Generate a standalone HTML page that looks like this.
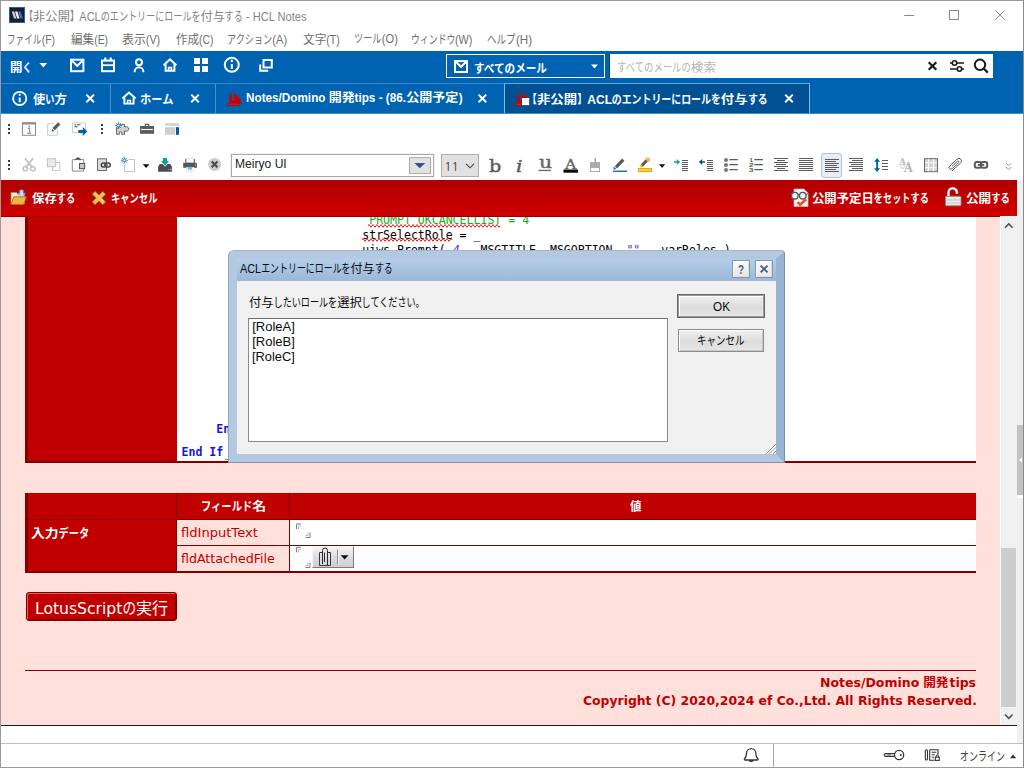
<!DOCTYPE html>
<html lang="ja"><head><meta charset="utf-8"><title>HCL Notes</title>
<style>
html,body{margin:0;padding:0}
body{width:1024px;height:768px;position:relative;overflow:hidden;background:#fff;font-family:"Liberation Sans","Noto Sans CJK JP",sans-serif}
.a{position:absolute}
.t{position:absolute;white-space:pre;line-height:1;transform-origin:0 0}
.r{display:inline-block;white-space:pre;vertical-align:baseline}
.s{display:inline-block;transform-origin:0 0;white-space:pre}
svg{position:absolute;overflow:visible}
</style></head><body>
<!-- ===== window chrome ===== -->
<div class="a" style="left:0;top:0;width:1024px;height:768px;box-sizing:border-box;border:1px solid #9b9b9b;border-right-color:#8a8a8a"></div>
<!-- blue nav bar -->
<div class="a" id="nav" style="left:1px;top:51px;width:1022px;height:32px;background:#0063b1"></div>
<!-- tab bar -->
<div class="a" id="tabs" style="left:1px;top:83px;width:1022px;height:31px;background:#0063b1"></div>
<!-- title icon + window controls -->
<svg style="left:0;top:0" width="1024" height="32" viewBox="0 0 1024 32" fill="none">
 <rect x="9.500" y="7.500" width="15" height="15" fill="#1a1e28" stroke="#2a5db8" stroke-width="1"/>
 <path d="M11.800 11.500l2.400 0 2.200 7-2.400 0z" fill="#c8ccd4"/><path d="M15 11.500l2.400 0 2.200 7-2.400 0z" fill="#f2f2f2"/><path d="M18.200 11.500l2.400 0 2.200 7-2.400 0z" fill="#3b78d8"/>
 <path d="M904.200 15.500h10" stroke="#8a8a8a" stroke-width="1"/>
 <rect x="949.500" y="10.500" width="9" height="9" stroke="#8a8a8a" stroke-width="1"/>
 <path d="M995.300 10.300l9.400 9.400M1004.700 10.300l-9.400 9.400" stroke="#8a8a8a" stroke-width="1"/>
</svg>
<!-- tab separators / active tab -->
<div class="a" style="left:1px;top:83px;width:809px;height:1px;background:#3d87c8"></div>
<div class="a" style="left:110px;top:84px;width:1px;height:29px;background:#4a90cf"></div>
<div class="a" style="left:215px;top:84px;width:1px;height:29px;background:#4a90cf"></div>
<div class="a" style="left:504px;top:83px;width:306px;height:30px;box-sizing:border-box;background:#005193;border:1px solid #8ab8e4;border-top-color:#6aa5da;border-bottom:none"></div>
<div class="a" style="left:1px;top:113px;width:1022px;height:1px;background:#3f8fd0"></div>
<!-- view dropdown + search -->
<div class="a" style="left:446px;top:54px;width:159px;height:24px;box-sizing:border-box;border:1px solid #fff"></div>
<div class="a" style="left:609px;top:54px;width:384px;height:24px;background:#fff;box-sizing:border-box;border-left:1px solid #1c3f66"></div>
<svg style="left:0;top:0" width="1024" height="120" viewBox="0 0 1024 120" fill="none" stroke="#fff" stroke-width="2">
 <!-- open caret -->
 <path d="M39.4 63h7.8l-3.9 4.4z" fill="#fff" stroke="none"/>
 <!-- mail -->
 <rect x="71" y="59.7" width="12.4" height="11.5"/><path d="M72 60.7l5.2 5.2 5.2-5.2"/>
 <!-- calendar -->
 <rect x="102" y="60.600" width="12" height="10.600"/><path d="M102 65.200h12" stroke-width="1.800"/><path d="M105.300 57.600v3M110.700 57.600v3" stroke-width="2.200"/>
 <!-- person -->
 <circle cx="139" cy="62.300" r="3"/><path d="M134.600 72.300v-.600a4.400 4.400 0 0 1 8.800 0v.600"/>
 <!-- home -->
 <path d="M163.6 65.3l6.4-6 6.4 6M165.6 64v6.8h8.8V64" stroke-linejoin="miter"/><path d="M168.6 70.6v-3h2.8v3" stroke-width="1.6"/>
 <!-- grid -->
 <g fill="#fff" stroke="none"><rect x="194" y="58" width="6" height="6"/><rect x="202" y="58" width="6" height="6"/><rect x="194" y="66" width="6" height="6"/><rect x="202" y="66" width="6" height="6"/></g>
 <!-- info -->
 <circle cx="231.8" cy="64.8" r="7"/><path d="M231.8 64v5" /><circle cx="231.8" cy="61" r="1.2" fill="#fff" stroke="none"/>
 <!-- windows -->
 <rect x="263.5" y="60" width="8.3" height="7.5"/><path d="M260.2 64.5v6.2h8"/>
 <!-- dropdown mail icon -->
 <rect x="455" y="61.100" width="12" height="10.900"/><path d="M456 62.100l5 4.700 5-4.700"/>
 <path d="M591 64.500h7l-3.500 4z" fill="#fff" stroke="none"/>
 <!-- search icons -->
 <g stroke="#1a1a1a">
  <path d="M928.700 62.200l7.600 7.600M936.300 62.200l-7.600 7.600" stroke-width="2.200"/>
  <path d="M950 63h14M950 69h14" stroke-width="1.600"/><circle cx="954.500" cy="63" r="2.200" fill="#fff" stroke-width="1.600"/><circle cx="959.500" cy="69" r="2.200" fill="#fff" stroke-width="1.600"/>
  <circle cx="980" cy="64.800" r="5.200" stroke-width="2"/><path d="M984 68.800l3.800 3.800" stroke-width="2.200"/>
 </g>
 <!-- tab icons -->
 <circle cx="19.700" cy="98.400" r="6.600" stroke-width="1.800"/><path d="M19.700 97.600v4.600"/><circle cx="19.700" cy="94.800" r="1.100" fill="#fff" stroke="none"/>
 <path d="M122.400 98.500l6.600-6 6.600 6M124.400 97.200v6.400h9.200v-6.400" stroke-width="1.900"/><path d="M127.600 103.400v-3h2.800v3" stroke-width="1.500"/>
 <!-- tab close X -->
 <g stroke-width="2"><path d="M86.400 94.600l7.600 7.600M94 94.600l-7.600 7.600"/><path d="M191.200 94.600l7.600 7.600M198.800 94.600l-7.600 7.600"/><path d="M478.600 94.600l7.600 7.600M486.200 94.600l-7.600 7.600"/><path d="M785.200 94.600l7.600 7.600M792.800 94.600l-7.600 7.600"/></g>
 <!-- flask icons -->
 <g transform="translate(0 0)" stroke="none" fill="#cc0000">
  <path d="M232.200 90.200h1.200l.600.800v1.600h-.600v-1.400z"/>
  <path d="M231 93.200h1v6l-.800 1.400-.900-1zM234 93.200h1v6.800l-1-1.200z"/>
  <path d="M229.300 95h2v4.800l-1 .9-1.300-1.800.500-1.500-.300-1.200z"/>
  <path d="M234.300 95h3l1.200 1.500.600 1.900 1.800.900v4.600h-1.600l-4.400-5z"/>
  <path d="M227.300 103.700l5.400-5.700 1 0 5.500 5.700.300 1.800-.600.600h-11.300l-.600-.600z"/>
  <path d="M231.500 100.300l1.700-1.900 1.700 1.900z" fill="#1a6ab8"/>
  <path d="M228.600 104.200h9.600" stroke="#3a76c0" stroke-width=".6"/>
 </g>
 <g transform="translate(288 0)" stroke="none" fill="#cc0000">
  <path d="M232.200 90.200h1.200l.600.800v1.600h-.600v-1.400z"/>
  <path d="M231 93.200h1v6l-.800 1.400-.900-1zM234 93.200h1v6.800l-1-1.200z"/>
  <path d="M229.300 95h2v4.800l-1 .9-1.300-1.800.500-1.500-.300-1.200z"/>
  <path d="M234.300 95h3l1.200 1.500.600 1.900 1.800.900v4.600h-1.600l-4.400-5z"/>
  <path d="M227.300 103.700l5.400-5.700 1 0 5.500 5.700.300 1.800-.600.600h-11.300l-.600-.600z"/>
  <path d="M231.500 100.300l1.700-1.900 1.700 1.900z" fill="#1a6ab8"/>
  <path d="M228.600 104.200h9.600" stroke="#3a76c0" stroke-width=".6"/>
 </g>
 <rect x="522" y="98" width="8" height="8" fill="#5a5a5a" stroke="none"/><rect x="522" y="98" width="7" height="7" fill="#fff" stroke="none"/>
</svg>

<!-- toolbars -->
<!-- font + size combos, selected align button -->
<div class="a" style="left:231px;top:154px;width:203px;height:23px;box-sizing:border-box;border:1px solid #a9a9a9;background:#fff;box-shadow:0 0 0 1px #f2f2f2"></div>
<div class="a" style="left:409px;top:157px;width:22px;height:17px;box-sizing:border-box;border:1px solid #adadad;background:#e1e1e1"></div>
<div class="a" style="left:441px;top:154px;width:38px;height:23px;box-sizing:border-box;border:1px solid #adadad;background:#e1e1e1"></div>
<div class="a" style="left:821px;top:153px;width:21px;height:25px;box-sizing:border-box;border:1px solid #a9c3ea;border-radius:3px;background:#e8ecf4"></div>
<svg style="left:0;top:110px" width="1024" height="72" viewBox="0 110 1024 72" fill="none">
 <!-- grips -->
 <g fill="#3c3c3c"><rect x="8" y="124" width="2" height="2"/><rect x="8" y="128" width="2" height="2"/><rect x="8" y="132" width="2" height="2"/>
 <rect x="101" y="124" width="2" height="2"/><rect x="101" y="128" width="2" height="2"/><rect x="101" y="132" width="2" height="2"/>
 <rect x="8" y="160" width="2" height="2"/><rect x="8" y="164" width="2" height="2"/><rect x="8" y="168" width="2" height="2"/></g>
 <!-- info box -->
 <rect x="22.500" y="123" width="13" height="12.300" stroke="#8c8c8c"/><rect x="22" y="122.300" width="14" height="2.200" fill="#8c8c8c"/>
 <path d="M27.700 128.400h1.900v4.600M27.300 133.300h4" stroke="#9a9a9a" stroke-width="1.300"/><rect x="28.400" y="125.800" width="1.600" height="1.500" fill="#9a9a9a"/>
 <!-- edit -->
 <path d="M54 123.800h-6.300v11.400h9.600v-6" stroke="#c9c9c9"/><path d="M59.300 123.300l-5.600 5.900" stroke="#5a5a5a" stroke-width="3.200"/><path d="M52 128.800l-.3 2.600 2.700-.4z" fill="#0f62a8"/>
 <!-- forward -->
 <rect x="72.500" y="122.800" width="13" height="9.700" stroke="#cfcfcf"/><path d="M74.500 124.800h1.600M77 124.800h3.500M74.500 126.800h3.200" stroke="#4a4a4a" stroke-width="1.100"/>
 <path d="M78.300 130h4.500v-2.900l4.500 4.400-4.500 4.400v-2.900h-4.500z" fill="#0060a8"/>
 <!-- puzzle -->
 <path d="M116.500 134.300v-6.300h2.500c-.8-2.200.3-3.700 2.400-3.700h3.100v2.700c2.200-.9 4.300.1 4.300 1.900 0 1.900-2.100 2.900-4.300 2v3.400h-2.800v-2.500h-2.400v2.500z" fill="#d2d2d2" stroke="#6a6a6a" stroke-width="1"/>
 <g stroke="#1f78c8" stroke-width="0.900"><path d="M118.400 122v7M114.900 125.500h7M116 123.100l4.800 4.800M120.800 123.100l-4.800 4.800"/></g><circle cx="118.400" cy="125.500" r="1.300" fill="#fff" stroke="#1f78c8" stroke-width=".8"/>
 <!-- toolbox -->
 <path d="M140 126h14v7.800h-14z" fill="#5a5a5a"/><path d="M145.300 126v-1.700h3.400v1.700" stroke="#5a5a5a" stroke-width="1.200"/><path d="M141.500 129.500h11" stroke="#fff" stroke-width="1"/><path d="M142 128.500v2M152 128.500v2" stroke="#fff" stroke-width="0.800"/>
 <!-- layout -->
 <rect x="165" y="123" width="14" height="3" fill="#d6d6d6"/><rect x="165" y="127.200" width="10.300" height="7.600" fill="#cfcfcf"/><rect x="176" y="127.200" width="3" height="7.600" fill="#005a9e"/>
 <!-- scissors -->
 <g stroke="#c2c2c2" stroke-width="1.500"><path d="M24.800 158.300l7.400 9.200M33.200 158.300l-7.400 9.200" stroke-width="1.800"/><ellipse cx="25.300" cy="168.700" rx="2.300" ry="2.100" transform="rotate(-35 25.300 168.700)"/><ellipse cx="32.700" cy="168.700" rx="2.300" ry="2.100" transform="rotate(35 32.700 168.700)"/></g>
 <!-- copy -->
 <rect x="52.500" y="162.500" width="7.300" height="7.800" stroke="#c6c6c6" fill="#fff"/><rect x="47.500" y="158.700" width="8.200" height="8" stroke="#c2c2c2" fill="#e9e9e9"/>
 <!-- paste -->
 <path d="M72.300 159.600h11.400v11.500h-11.400z" stroke="#8a8a8a" fill="#fff"/><path d="M75 159.800h6l-1.200-1.600-1.800-1.200-1.800 1.200z" fill="#555"/><rect x="79.500" y="163.500" width="5.200" height="5.200" fill="#c6c6c6" stroke="#555"/>
 <!-- link box -->
 <rect x="97.500" y="158.800" width="9" height="11.700" fill="#dedede" stroke="#6a6a6a"/><rect x="101.300" y="163" width="5" height="4" rx="2" stroke="#444" stroke-width="1.500" fill="#dedede"/><rect x="105.300" y="163" width="5" height="4" rx="2" stroke="#444" stroke-width="1.500" fill="#fff"/><path d="M104 165h4" stroke="#444" stroke-width="1.400"/>
 <!-- new doc -->
 <path d="M124.500 159.500h10v12h-10z" fill="#fff" stroke="#c4c4c4"/><rect x="120" y="156" width="8.600" height="8.600" fill="#fff"/>
 <g stroke="#1f78c8" stroke-width="0.900"><path d="M124.300 156.800v7M120.800 160.300h7M121.900 157.900l4.800 4.800M126.700 157.900l-4.800 4.800"/></g><circle cx="124.300" cy="160.300" r="1.300" fill="#fff" stroke="#1f78c8" stroke-width=".8"/>
 <path d="M142.800 164.200h6.600l-3.300 3.900z" fill="#111"/>
 <!-- download tray -->
 <path d="M158.100 171.800v-5.300l1.800-2.400h2.600l2.500 2.300 2.500-2.300h2.700l1.700 2.400v5.300z" fill="#4d4d4d"/><path d="M162.900 158.100h4.100v2.900h2l-4 4.700-4-4.700h1.900z" fill="#07a39c"/><rect x="167.900" y="168.800" width="1.300" height="1.300" fill="#10b0aa"/><rect x="169.900" y="168.800" width="1.300" height="1.300" fill="#5cc8f2"/>
 <!-- printer -->
 <rect x="185.300" y="159" width="9.600" height="4" fill="#555"/><rect x="186.500" y="158.400" width="7.200" height="4.400" fill="#fff" stroke="#d4d4d4" stroke-width=".6"/><path d="M183.200 162.800h13.700v5h-13.700z" fill="#555"/><rect x="186.300" y="167.300" width="7.600" height="4.300" fill="#fff" stroke="#d4d4d4" stroke-width=".6"/><rect x="187.800" y="166.900" width="4.300" height="2.800" fill="#68bdf0"/><rect x="194.900" y="164.200" width="1" height="1.600" fill="#8fd14f"/>
 <!-- circle x -->
 <circle cx="214.600" cy="164.400" r="6.500" fill="#cdcdcd"/><path d="M211.700 161.500l5.800 5.800M217.500 161.500l-5.800 5.800" stroke="#4a4a4a" stroke-width="2.200"/>
 <!-- combo arrows -->
 <path d="M414.300 163h11l-5.500 5.300z" fill="#2f5597"/><path d="M466 163.800l4 4 4-4" stroke="#444" stroke-width="1.100"/>
 <!-- A underline bar, u underline -->
 <rect x="563.500" y="169.500" width="14.500" height="3.200" fill="#0a0a0a"/>
 <rect x="538.500" y="169.800" width="12.500" height="1.300" fill="#6a6a6a"/>
 <!-- gray brush -->
 <rect x="594.500" y="158" width="1.500" height="4.500" fill="#aaa"/><rect x="590.500" y="162.500" width="9" height="9" fill="#fff" stroke="#aaa"/><rect x="590.500" y="162.500" width="9" height="5.500" fill="#aaa"/>
 <!-- pencil line -->
 <path d="M623.300 159.600l-7.400 7.700" stroke="#5a5a5a" stroke-width="3.200"/><path d="M613.700 166.600l-.2 2.900 2.900-.4z" fill="#0f62a8"/><rect x="613" y="170.600" width="14" height="1.300" fill="#0060a8"/>
 <!-- highlighter -->
 <rect x="638.500" y="168.600" width="13" height="3" fill="#ffd83a" stroke="#f59a00"/><path d="M646.800 160.400l-5 5.300" stroke="#5a5a5a" stroke-width="3"/><circle cx="648" cy="159.600" r="1.700" fill="#ffc83a" stroke="#f08a00" stroke-width=".7"/><path d="M639.500 167.800l1.300-3.200 2.400 2.200z" fill="#ffb400"/>
 <path d="M659 164.200h6.200l-3.100 3.800z" fill="#111"/>
 <!-- indent -->
 <path d="M674 161.200h2.800v-2.100l3.300 2.900-3.300 2.900v-2.100h-2.800z" fill="#12a5a5"/>
 <g stroke="#5a5a5a" stroke-width="1"><path d="M682 160.5h6M682 162.5h6M682 164.5h6M682 166.5h6M682 168.5h6M682 170.5h6"/><path d="M707 160.5h6M707 162.5h6M707 164.5h6M707 166.5h6M707 168.5h6M707 170.5h6"/></g>
 <path d="M705 161.200h-2.800v-2.100l-3.400 2.900 3.400 2.900v-2.100h2.800z" fill="#0a5c5c"/>
 <!-- bullets -->
 <g fill="#777"><circle cx="726" cy="159.900" r="2"/><circle cx="726" cy="165" r="2"/><circle cx="726" cy="170.100" r="2"/></g>
 <g stroke="#5a5a5a" stroke-width="1.300"><path d="M729.300 159.600h8.500M729.300 164.700h8.500M729.300 169.700h8.500M754.300 159.600h8.600M754.300 164.700h8.600M754.300 169.700h8.600"/></g>
 <!-- center / justify / left / right -->
 <g stroke="#5a5a5a" stroke-width="1"><path d="M774 158.5h14M777 160.5h8M774 162.5h14M776 164.5h10M774 166.5h14M777 168.5h8M774 170.5h14"/><path d="M799 158.5h14M799 160.5h14M799 162.5h14M799 164.5h14M799 166.5h14M799 168.5h14M799 170.5h14"/><path d="M825 159.5h14M825 161.5h11M825 163.5h14M825 165.5h12M825 167.5h14M825 169.5h11M825 171.5h14"/><path d="M849 158.5h14M852 160.5h11M849 162.5h14M851 164.5h12M849 166.5h14M852 168.5h11M849 170.5h14"/>
 <path d="M882 160.500h6M882 163.500h6M882 166.500h6M882 169.500h6"/></g>
 <path d="M877.100 158l3 3.700h-2.100v6.600h2.100l-3 3.700-3-3.700h2.100v-6.600h-2.100z" fill="#0060a0"/>
 <!-- table -->
 <rect x="924.500" y="158.700" width="13" height="13" fill="#d4d4d4" stroke="#686868"/><path d="M928.500 159.200v12M933.500 159.200v12M925 162.700h12M925 167.700h12" stroke="#fbfbfb" stroke-width="1"/>
 <!-- paperclip -->
 <g transform="rotate(-43 955.500 165)" stroke="#555" stroke-width=".9"><path d="M948.500 167h12.200a2.600 2.600 0 0 0 0-5.200h-10.200a1.800 1.800 0 0 0 0 3.600h9a.900.900 0 0 0 0-1.800h-7.500"/></g>
 <!-- link -->
 <rect x="974.800" y="162" width="6.400" height="5.700" rx="2" stroke="#5a5a5a" stroke-width="2"/><rect x="980.800" y="162" width="6.400" height="5.700" rx="2" stroke="#5a5a5a" stroke-width="2"/><path d="M977.800 164.850h6.400" stroke="#5a5a5a" stroke-width="1.900"/>
 <!-- AA diamond -->
 <path d="M900.500 166.500l2.200-2.600 2.200 2.600-2.200 2.600z" stroke="#c4c4c4" stroke-width=".9"/>
 <!-- chevrons -->
 <path d="M1006 163.200l2.700 2.400 2.700-2.400M1006 167l2.700 2.400 2.700-2.400" stroke="#8a8a8a" stroke-width=".9"/>
</svg>

<!-- red action bar -->
<div class="a" id="actbar" style="left:1px;top:180px;width:1016px;height:36px;background:linear-gradient(#b00000 0,#b80000 30%,#cf0000 100%)"></div>
<div class="a" style="left:1px;top:216px;width:1016px;height:1px;background:#980000"></div>
<div class="a" style="left:1017px;top:180px;width:6px;height:563px;background:#f0f0f0"></div>
<svg style="left:0;top:180px" width="1024" height="36" viewBox="0 180 1024 36" fill="none">
 <!-- save folder -->
 <path d="M11 192.500h5.500l1.500 1.800h6.500v9.500h-13.500z" fill="#f6efd6" stroke="#b98a2e" stroke-width=".8"/>
 <path d="M13.800 196.800h12.600l-2.800 7.600h-12.600z" fill="#f0b441" stroke="#a8741a" stroke-width=".9"/>
 <path d="M19.800 190h3.400v3.200h2.200l-3.900 3.900-3.900-3.900h2.200z" fill="#cfe2f7" stroke="#5b8fd0" stroke-width=".8"/>
 <!-- cancel X -->
 <g transform="rotate(45 98.900 198.100)"><path d="M91.400 196h5.400v-5.400h4.200v5.400h5.400v4.200h-5.400v5.400h-4.200v-5.400h-5.400z" fill="#efc050" stroke="#8f6218" stroke-width=".9" stroke-linejoin="round"/><path d="M92.400 197h13" stroke="#f8dc8a" stroke-width=".9"/></g>
 <!-- glasses doc -->
 <path d="M794 189h10l4 4v13.500h-14z" fill="#f4f4f4" stroke="#b9b9b9" stroke-width=".8"/>
 <circle cx="794.800" cy="195.700" r="3.300" fill="#e8f0f8" stroke="#555" stroke-width="1.300"/><circle cx="802.800" cy="195.700" r="3.300" fill="#e8f0f8" stroke="#555" stroke-width="1.300"/><path d="M798 195h1.600M791 194.500l-1-1M806.200 194.500l1.600-1" stroke="#555" stroke-width="1"/>
 <path d="M797.500 202.200l2.600 2.600 6-5.600" stroke="#e8541c" stroke-width="2.600"/>
 <!-- lock -->
 <rect x="945.500" y="196.300" width="15.500" height="9.500" rx="1" fill="#e9e9e9" stroke="#8a8a8a" stroke-width=".9"/><path d="M946.500 200h13.500M946.500 203h13.500" stroke="#c4c4c4" stroke-width="1"/>
 <path d="M948.500 196v-3.500a4.200 4.200 0 0 1 8.400 0v1.200" stroke="#d0d0d0" stroke-width="2.600"/><path d="M948.500 196v-3.500a4.200 4.200 0 0 1 8.400 0v1.200" stroke="#f4f4f4" stroke-width="1.200"/>
</svg>

<!-- ===== document area ===== -->
<div class="a" id="doc" style="left:1px;top:217px;width:999px;height:508px;background:#ffe0db"></div>
<!-- table 1 (code) -->
<div class="a" style="left:25px;top:217px;width:152px;height:246px;background:#c00000;box-sizing:border-box;border-left:3px solid #800000;border-bottom:2px solid #800000"></div>
<div class="a" style="left:177px;top:217px;width:799px;height:246px;background:#fff;box-sizing:border-box;border-bottom:2px solid #800000"></div>
<div class="a" id="code" style="left:181.500px;top:217px;width:790px;height:244px;overflow:hidden;font-family:'DejaVu Sans Mono','Liberation Mono',monospace;font-size:11.550px;line-height:15px;white-space:pre;color:#000">
<div class="a" style="left:0;top:-4.300px;color:#18ae18">                           PROMPT_OKCANCELLIST = 4</div>
<div class="a" style="left:0;top:10.700px">                          strSelectRole = _</div>
<div class="a" style="left:0;top:25.700px">                          uiws.Prompt( <i style="color:#5a2ad2">4</i>,  MSGTITLE, MSGOPTION, <i style="color:#5a2ad2">""</i>,  varRoles )</div>
<div class="a" style="left:0;top:204.700px;color:#1414e6;font-weight:bold">     End If</div>
<div class="a" style="left:0;top:227.600px;color:#1414e6;font-weight:bold">End If</div>
</div>
<svg style="left:177px;top:217px" width="400" height="30" viewBox="177 217 400 30" fill="none" stroke="#e41a1a" stroke-width="1"><path d="M368 225.9q1 -2.800 2 0t2 0t2 0t2 0t2 0t2 0t2 0t2 0t2 0t2 0t2 0t2 0t2 0t2 0t2 0t2 0t2 0t2 0t2 0t2 0t2 0t2 0t2 0t2 0t2 0t2 0t2 0t2 0t2 0t2 0t2 0t2 0t2 0t2 0t2 0t2 0t2 0t2 0t2 0t2 0t2 0t2 0t2 0t2 0t2 0t2 0t2 0t2 0t2 0t2 0t2 0t2 0t2 0t2 0t2 0t2 0t2 0t2 0t2 0t2 0t2 0t2 0t2 0t2 0t2 0t2 0"/><path d="M362 239.9q1 -2.800 2 0t2 0t2 0t2 0t2 0t2 0t2 0t2 0t2 0t2 0t2 0t2 0t2 0t2 0t2 0t2 0t2 0t2 0t2 0t2 0t2 0t2 0t2 0t2 0t2 0t2 0t2 0t2 0t2 0t2 0t2 0t2 0t2 0t2 0t2 0t2 0t2 0t2 0t2 0t2 0t2 0t2 0t2 0t2 0t2 0"/></svg>
<div class="a" style="left:225px;top:457px;width:3px;height:2px;border-right:1px solid #8a8a8a;border-bottom:1px solid #8a8a8a"></div>
<!-- table 2 (input data) -->
<div class="a" style="left:25px;top:493px;width:951px;height:80px;background:#c00000;box-sizing:border-box;border-left:3px solid #800000;border-bottom:2px solid #800000"></div>
<div class="a" style="left:177px;top:520px;width:112px;height:51px;background:#ffe0db"></div>
<div class="a" style="left:290px;top:520px;width:686px;height:51px;background:#fff"></div>
<div class="a" style="left:27px;top:519px;width:949px;height:1px;background:#800000"></div>
<div class="a" style="left:176px;top:545px;width:800px;height:1px;background:#800000"></div>
<div class="a" style="left:176px;top:493px;width:1px;height:78px;background:#800000"></div>
<div class="a" style="left:289px;top:493px;width:1px;height:78px;background:#800000"></div>
<!-- field brackets -->
<svg style="left:290px;top:520px" width="80" height="52" viewBox="290 520 80 52" fill="none" stroke-width="1">
 <g stroke="#7f7f7f"><path d="M296.500 529v-5h4.500"/><path d="M305.500 537.500h4.500v-5"/><path d="M296.500 552.300v-5h4.500"/><path d="M305.500 567.500h4.500v-5"/></g>
 <g stroke="#b4b4c4"><path d="M298.500 529v-3h2.500"/><path d="M305.500 535.500h2.500v-3"/><path d="M298.500 552.300v-3h2.500"/><path d="M305.500 565.500h2.500v-3"/></g>
</svg>
<!-- attach button -->
<div class="a" style="left:312px;top:546px;width:42px;height:22px;box-sizing:border-box;border:1px solid #7c7c7c;border-top-color:#f4f4f4;border-left-color:#f4f4f4;background:linear-gradient(#f4f4f4,#dadada 60%,#cfcfcf)"></div>
<svg style="left:312px;top:546px" width="42" height="22" viewBox="312 546 42 22" fill="none">
 <path d="M319.500 565.500v-13h2.500M328 552.500h2.500v13h-11" stroke="#3a3a3a" stroke-width="1"/>
 <path d="M322.500 564v-13.500a2.500 2.500 0 0 1 5 0v15M324.500 562v-9.500" stroke="#2a2a2a" stroke-width="1"/>
 <path d="M337.500 549.500v15" stroke="#8c8c8c"/><path d="M338.500 549.500v15" stroke="#fff"/>
 <path d="M340.700 555.200h7.800l-3.900 4.200z" fill="#111"/>
</svg>
<!-- run button -->
<div class="a" style="left:26px;top:592px;width:151px;height:29px;box-sizing:border-box;border:1px solid #7a0000;border-radius:3px;background:#c00000;box-shadow:inset 1px 1px 0 #e06060, inset -1px -1px 0 #900000"></div>
<!-- footer rule -->
<div class="a" style="left:25px;top:670px;width:951px;height:1px;background:#900000"></div>
<div class="a" style="left:1px;top:725px;width:1016px;height:1px;background:#1a1a1a"></div>

<!-- dialog frame -->
<div class="a" style="left:228px;top:250px;width:557px;height:213px;box-sizing:border-box;border-radius:6px 4px 0 0;background:#b4c8e0;border:1px solid #8ea6c6;border-top-color:#9fb6d4;border-right-color:#7790b0;border-bottom-color:#7790b0"></div>
<div class="a" style="left:776px;top:252px;width:8px;height:210px;background:#98b3d3;clip-path:polygon(0 7px,100% 0,100% 100%,0 calc(100% - 8px))"></div>
<div class="a" style="left:237px;top:259px;width:539px;height:22px;background:linear-gradient(#b4cfeb,#a6c1e0 60%,#9cb7d6)"></div>
<div class="a" style="left:237px;top:281px;width:539px;height:173px;background:#f0f0f0"></div>
<!-- caption buttons -->
<div class="a" style="left:732px;top:260px;width:18px;height:18px;box-sizing:border-box;border:1px solid #7b96b6;background:linear-gradient(#fafafa,#e6e6e6);box-shadow:inset 1px 1px 0 #fff,inset -1px -1px 0 #dcdcdc"></div>
<div class="a" style="left:755px;top:260px;width:18px;height:18px;box-sizing:border-box;border:1px solid #7b96b6;background:linear-gradient(#fafafa,#e6e6e6);box-shadow:inset 1px 1px 0 #fff,inset -1px -1px 0 #dcdcdc"></div>
<svg style="left:755px;top:260px" width="18" height="18" viewBox="755 260 18 18"><path d="M760.600 265.600l7 6.800M767.600 265.600l-7 6.800" stroke="#4a6080" stroke-width="1.900"/></svg>
<!-- listbox -->
<div class="a" style="left:248px;top:318px;width:420px;height:124px;box-sizing:border-box;background:#fff;border:1px solid #8a8a8a;border-top-color:#6e6e6e"></div>
<!-- buttons -->
<div class="a" style="left:677px;top:294px;width:88px;height:24px;box-sizing:border-box;border:1px solid #686868;background:linear-gradient(#f1f1f1,#dcdcdc 55%,#e6e6e6);box-shadow:inset 0 0 0 1px #9c9c9c,inset 2px 2px 0 #fff"></div>
<div class="a" style="left:678px;top:329px;width:86px;height:23px;box-sizing:border-box;border:1px solid #8c8c8c;background:linear-gradient(#f1f1f1,#dcdcdc 55%,#e6e6e6);box-shadow:inset 1px 1px 0 #fff, inset -1px -1px 0 #c8c8c8"></div>
<!-- size grip -->
<svg style="left:764px;top:442px" width="12" height="12" viewBox="0 0 12 12"><path d="M2 12l10-10M5.500 12l6.500-6.500M9 12l3-3" stroke="#8a8a8a" stroke-width="1"/><path d="M3 12l9-9M6.500 12l5.500-5.500M10 12l2-2" stroke="#fff" stroke-width="1"/></svg>

<!-- scrollbar -->
<div class="a" style="left:1000px;top:216px;width:1px;height:509px;background:#fff"></div>
<div class="a" style="left:1001px;top:216px;width:16px;height:509px;background:#f0f0f0"></div>
<div class="a" style="left:1001px;top:548px;width:15px;height:159px;background:#cdcdcd"></div>
<div class="a" style="left:1017px;top:425px;width:6px;height:70px;background:#c2c2c2"></div>
<div class="a" style="left:1017px;top:495px;width:6px;height:3px;background:#fff"></div>
<svg style="left:1000px;top:216px" width="24" height="510" viewBox="1000 216 24 510" fill="none">
 <path d="M1005 227.700l3.800-3.800 3.800 3.800" stroke="#505050" stroke-width="1.600"/>
 <path d="M1005 714.500l3.800 3.800 3.800-3.800" stroke="#505050" stroke-width="1.600"/>
 <path d="M1022 457.500v5l-3-2.500z" fill="#fff"/>
</svg>

<!-- status -->
<div class="a" style="left:1px;top:726px;width:1016px;height:17px;background:#fff"></div>
<div class="a" style="left:1px;top:743px;width:1022px;height:1px;background:#bdbdbd"></div>
<div class="a" style="left:773px;top:744px;width:1px;height:23px;background:#a8a8a8"></div>
<svg style="left:700px;top:744px" width="324" height="24" viewBox="700 744 324 24" fill="none" stroke="#333" stroke-width="1.300">
 <path d="M745 760h12.400c.800 0 .900-.900.300-1.400-1.600-1.300-1.800-2.600-1.800-5.200a4.700 4.700 0 0 0-9.400 0c0 2.600-.200 3.900-1.800 5.200-.600.500-.500 1.400.300 1.400zM749.300 760.300a2 2 0 0 0 3.800 0M751.200 748.800v-.900"/>
 <circle cx="899.100" cy="755" r="4.600"/><circle cx="900.800" cy="755" r="1" fill="#333" stroke="none"/><path d="M894.500 753.600h-9.300l-1 1.400 1 1.400h9.300" stroke-width="1.100"/><path d="M887.200 755h3.500" stroke-width=".8"/>
 <rect x="925.300" y="749.700" width="2.200" height="10.300" rx="1.100" stroke-width="1.100"/><path d="M929.700 749.800h8.300v5M929.700 749.800v10.400h4.800M931.700 752.300h4.600M931.700 754.800h3M931.700 757.300h2.400" stroke-width="1.100"/><rect x="935.300" y="757.200" width="4" height="3.200" stroke-width="1.100"/><path d="M936.200 757v-1a1.100 1.100 0 0 1 2.200 0v1" stroke-width="1"/>
 <path d="M1010 758.200h6.200l-3.100-3.600z" fill="#333" stroke="none"/>
</svg>

<div class="t" style="left:23.56px;top:11.00px;color:#848484;font-family:'Liberation Sans','Noto Sans CJK JP',sans-serif;font-size:12px;transform:scaleX(1.0233);"><span class="r" style="width:8.89px"><span class="s" style="transform:scaleX(0.740)">【</span></span><span class="r" style="width:36.02px">非公開</span><span class="r" style="width:8.89px"><span class="s" style="transform:scaleX(0.740)">】</span></span><span class="r" style="width:21.01px"><span class="s" style="transform:scaleX(0.900)">ACL</span></span><span class="r" style="width:97.69px"><span class="s" style="transform:scaleX(0.740)">のエントリーにロールを</span></span><span class="r" style="width:24.02px">付与</span><span class="r" style="width:17.77px"><span class="s" style="transform:scaleX(0.740)">する</span></span><span class="r" style="width:62.02px"><span class="s" style="transform:scaleX(0.900)"> - HCL Notes</span></span></div>
<div class="t" style="left:7.23px;top:33.90px;color:#6e6e6e;font-family:'Liberation Sans','Noto Sans CJK JP',sans-serif;font-size:12px;transform:scaleX(0.9653);"><span class="r" style="width:35.53px"><span class="s" style="transform:scaleX(0.740)">ファイル</span></span><span class="r" style="width:13.80px"><span class="s" style="transform:scaleX(0.900)">(F)</span></span></div>
<div class="t" style="left:70.50px;top:34.40px;color:#6e6e6e;font-family:'Liberation Sans','Noto Sans CJK JP',sans-serif;font-size:12px;transform:scaleX(0.9658);"><span class="r" style="width:24.02px">編集</span><span class="r" style="width:14.40px"><span class="s" style="transform:scaleX(0.900)">(E)</span></span></div>
<div class="t" style="left:122.20px;top:34.40px;color:#6e6e6e;font-family:'Liberation Sans','Noto Sans CJK JP',sans-serif;font-size:12px;transform:scaleX(0.9947);"><span class="r" style="width:24.02px">表示</span><span class="r" style="width:14.40px"><span class="s" style="transform:scaleX(0.900)">(V)</span></span></div>
<div class="t" style="left:175.80px;top:34.40px;color:#6e6e6e;font-family:'Liberation Sans','Noto Sans CJK JP',sans-serif;font-size:12px;transform:scaleX(0.9615);"><span class="r" style="width:24.02px">作成</span><span class="r" style="width:15.00px"><span class="s" style="transform:scaleX(0.900)">(C)</span></span></div>
<div class="t" style="left:227.27px;top:33.90px;color:#6e6e6e;font-family:'Liberation Sans','Noto Sans CJK JP',sans-serif;font-size:12px;transform:scaleX(1.0298);"><span class="r" style="width:43.96px"><span class="s" style="transform:scaleX(0.740)">アクション</span></span><span class="r" style="width:14.40px"><span class="s" style="transform:scaleX(0.900)">(A)</span></span></div>
<div class="t" style="left:302.80px;top:34.40px;color:#6e6e6e;font-family:'Liberation Sans','Noto Sans CJK JP',sans-serif;font-size:12px;transform:scaleX(0.9711);"><span class="r" style="width:24.02px">文字</span><span class="r" style="width:13.80px"><span class="s" style="transform:scaleX(0.900)">(T)</span></span></div>
<div class="t" style="left:353.77px;top:33.40px;color:#6e6e6e;font-family:'Liberation Sans','Noto Sans CJK JP',sans-serif;font-size:12px;transform:scaleX(1.0293);"><span class="r" style="width:26.65px"><span class="s" style="transform:scaleX(0.740)">ツール</span></span><span class="r" style="width:15.60px"><span class="s" style="transform:scaleX(0.900)">(O)</span></span></div>
<div class="t" style="left:411.00px;top:33.90px;color:#6e6e6e;font-family:'Liberation Sans','Noto Sans CJK JP',sans-serif;font-size:12px;"><span class="r" style="width:44.41px"><span class="s" style="transform:scaleX(0.740)">ウィンドウ</span></span><span class="r" style="width:17.40px"><span class="s" style="transform:scaleX(0.900)">(W)</span></span></div>
<div class="t" style="left:487.40px;top:34.40px;color:#6e6e6e;font-family:'Liberation Sans','Noto Sans CJK JP',sans-serif;font-size:12px;transform:scaleX(1.0738);"><span class="r" style="width:26.65px"><span class="s" style="transform:scaleX(0.740)">ヘルプ</span></span><span class="r" style="width:15.00px"><span class="s" style="transform:scaleX(0.900)">(H)</span></span></div>
<div class="t" style="left:10.46px;top:61.60px;color:#fff;font-family:'Liberation Sans','Noto Sans CJK JP',sans-serif;font-size:12px;font-weight:bold;transform:scaleX(1.0389);"><span class="r" style="width:12.02px">開</span><span class="r" style="width:8.89px"><span class="s" style="transform:scaleX(0.740)">く</span></span></div>
<div class="t" style="left:474.32px;top:62.60px;color:#fff;font-family:'Liberation Sans','Noto Sans CJK JP',sans-serif;font-size:12px;font-weight:bold;transform:scaleX(0.8817);">すべてのメール</div>
<div class="t" style="left:617.45px;top:61.50px;color:#b4b4b4;font-family:'Liberation Sans','Noto Sans CJK JP',sans-serif;font-size:12px;transform:scaleX(1.0538);"><span class="r" style="width:70.07px"><span class="s" style="transform:scaleX(0.740)">すべてのメールの</span></span><span class="r" style="width:24.02px">検索</span></div>
<div class="t" style="left:32.80px;top:93.60px;color:#fff;font-family:'Liberation Sans','Noto Sans CJK JP',sans-serif;font-size:12px;font-weight:bold;transform:scaleX(1.0273);"><span class="r" style="width:12.02px">使</span><span class="r" style="width:8.89px"><span class="s" style="transform:scaleX(0.740)">い</span></span><span class="r" style="width:12.02px">方</span></div>
<div class="t" style="left:140.06px;top:93.60px;color:#fff;font-family:'Liberation Sans','Noto Sans CJK JP',sans-serif;font-size:12px;font-weight:bold;transform:scaleX(0.9382);">ホーム</div>
<div class="t" style="left:246.20px;top:92.40px;color:#fff;font-family:'Liberation Sans','Noto Sans CJK JP',sans-serif;font-size:12px;font-weight:bold;transform:scaleX(1.0854);"><span class="r" style="width:76.20px"><span class="s" style="transform:scaleX(0.900)">Notes/Domino </span></span><span class="r" style="width:24.02px">開発</span><span class="r" style="width:47.42px"><span class="s" style="transform:scaleX(0.900)">tips - (86.</span></span><span class="r" style="width:48.02px">公開予定</span><span class="r" style="width:3.60px"><span class="s" style="transform:scaleX(0.900)">)</span></span></div>
<div class="t" style="left:527.31px;top:93.80px;color:#fff;font-family:'Liberation Sans','Noto Sans CJK JP',sans-serif;font-size:12px;font-weight:bold;transform:scaleX(1.1158);"><span class="r" style="width:8.89px"><span class="s" style="transform:scaleX(0.740)">【</span></span><span class="r" style="width:36.02px">非公開</span><span class="r" style="width:8.89px"><span class="s" style="transform:scaleX(0.740)">】</span></span><span class="r" style="width:22.20px"><span class="s" style="transform:scaleX(0.900)">ACL</span></span><span class="r" style="width:97.69px"><span class="s" style="transform:scaleX(0.740)">のエントリーにロールを</span></span><span class="r" style="width:24.02px">付与</span><span class="r" style="width:17.77px"><span class="s" style="transform:scaleX(0.740)">する</span></span></div>
<div class="t" style="left:235.43px;top:158.00px;color:#222;font-family:'Liberation Sans','Noto Sans CJK JP',sans-serif;font-size:12.5px;transform:scaleX(0.9673);">Meiryo UI</div>
<div class="t" style="left:444.30px;top:160.50px;color:#333;font-family:'NanumGothic',sans-serif;font-size:12px;">11</div>
<div class="t" style="left:489.00px;top:158.00px;color:#5a5a5a;font-family:'DejaVu Serif','Liberation Serif',serif;font-size:17.5px;transform:scaleX(1.0909);-webkit-text-stroke:0.45px #5a5a5a;">b</div>
<div class="t" style="left:516.35px;top:157.50px;color:#5a5a5a;font-family:'DejaVu Serif','Liberation Serif',serif;font-size:17.5px;font-style:italic;transform:scaleX(1.1500);-webkit-text-stroke:0.45px #5a5a5a;">i</div>
<div class="t" style="left:538.50px;top:155.30px;color:#666;font-family:'DejaVu Serif','Liberation Serif',serif;font-size:16.5px;transform:scaleX(1.2500);-webkit-text-stroke:0.4px #666;">u</div>
<div class="t" style="left:565.00px;top:158.00px;color:#666;font-family:'DejaVu Serif','Liberation Serif',serif;font-size:13.5px;transform:scaleX(1.1600);-webkit-text-stroke:0.4px #666;">A</div>
<div class="t" style="left:899.00px;top:158.00px;color:#bdbdbd;font-family:'DejaVu Serif','Liberation Serif',serif;font-size:9px;font-weight:bold;">A</div>
<div class="t" style="left:903.50px;top:161.00px;color:#b4b4b4;font-family:'DejaVu Serif','Liberation Serif',serif;font-size:13px;font-weight:bold;transform:scaleX(0.8636);">A</div>
<div class="t" style="left:749.50px;top:156.60px;color:#555;font-family:'Liberation Sans','Noto Sans CJK JP',sans-serif;font-size:6px;font-weight:bold;">1</div>
<div class="t" style="left:749.00px;top:161.80px;color:#555;font-family:'Liberation Sans','Noto Sans CJK JP',sans-serif;font-size:6px;font-weight:bold;transform:scaleX(1.3333);">2</div>
<div class="t" style="left:749.00px;top:167.00px;color:#555;font-family:'Liberation Sans','Noto Sans CJK JP',sans-serif;font-size:6px;font-weight:bold;transform:scaleX(1.3333);">3</div>
<div class="t" style="left:31.60px;top:192.60px;color:#fff;font-family:'Liberation Sans','Noto Sans CJK JP',sans-serif;font-size:12px;font-weight:bold;transform:scaleX(1.0317);"><span class="r" style="width:24.02px">保存</span><span class="r" style="width:17.77px"><span class="s" style="transform:scaleX(0.740)">する</span></span></div>
<div class="t" style="left:110.53px;top:192.60px;color:#fff;font-family:'Liberation Sans','Noto Sans CJK JP',sans-serif;font-size:12px;font-weight:bold;transform:scaleX(0.7746);">キャンセル</div>
<div class="t" style="left:812.27px;top:192.80px;color:#fff;font-family:'Liberation Sans','Noto Sans CJK JP',sans-serif;font-size:12px;font-weight:bold;transform:scaleX(1.0312);"><span class="r" style="width:60.02px">公開予定日</span><span class="r" style="width:53.29px"><span class="s" style="transform:scaleX(0.740)">をセットする</span></span></div>
<div class="t" style="left:965.95px;top:192.80px;color:#fff;font-family:'Liberation Sans','Noto Sans CJK JP',sans-serif;font-size:12px;font-weight:bold;transform:scaleX(1.0500);"><span class="r" style="width:24.02px">公開</span><span class="r" style="width:17.77px"><span class="s" style="transform:scaleX(0.740)">する</span></span></div>
<div class="t" style="left:240.00px;top:263.30px;color:#0a0a0a;font-family:'Liberation Sans','Noto Sans CJK JP',sans-serif;font-size:12px;transform:scaleX(1.0066);"><span class="r" style="width:21.01px"><span class="s" style="transform:scaleX(0.900)">ACL</span></span><span class="r" style="width:88.81px"><span class="s" style="transform:scaleX(0.740)">エントリーにロールを</span></span><span class="r" style="width:24.02px">付与</span><span class="r" style="width:17.77px"><span class="s" style="transform:scaleX(0.740)">する</span></span></div>
<div class="t" style="left:737.90px;top:262.60px;color:#465a74;font-family:'Liberation Sans','Noto Sans CJK JP',sans-serif;font-size:13px;font-weight:bold;transform:scaleX(0.7625);">?</div>
<div class="t" style="left:248.70px;top:296.80px;color:#0a0a0a;font-family:'Liberation Sans','Noto Sans CJK JP',sans-serif;font-size:12px;transform:scaleX(1.0235);"><span class="r" style="width:24.02px">付与</span><span class="r" style="width:62.17px"><span class="s" style="transform:scaleX(0.740)">したいロールを</span></span><span class="r" style="width:24.02px">選択</span><span class="r" style="width:61.63px"><span class="s" style="transform:scaleX(0.740)">してください。</span></span></div>
<div class="t" style="left:252.20px;top:319.60px;color:#0a0a0a;font-family:'Liberation Sans','Noto Sans CJK JP',sans-serif;font-size:13px;">[RoleA]</div>
<div class="t" style="left:252.20px;top:334.60px;color:#0a0a0a;font-family:'Liberation Sans','Noto Sans CJK JP',sans-serif;font-size:13px;">[RoleB]</div>
<div class="t" style="left:252.21px;top:349.60px;color:#0a0a0a;font-family:'Liberation Sans','Noto Sans CJK JP',sans-serif;font-size:13px;transform:scaleX(0.9857);">[RoleC]</div>
<div class="t" style="left:713.00px;top:300.20px;color:#0a0a0a;font-family:'Liberation Sans','Noto Sans CJK JP',sans-serif;font-size:13px;transform:scaleX(0.9053);">OK</div>
<div class="t" style="left:697.31px;top:335.00px;color:#0a0a0a;font-family:'Liberation Sans','Noto Sans CJK JP',sans-serif;font-size:12px;transform:scaleX(0.7898);">キャンセル</div>
<div class="t" style="left:201.34px;top:501.30px;color:#fff;font-family:'Liberation Sans','Noto Sans CJK JP',sans-serif;font-size:12px;font-weight:bold;transform:scaleX(1.1574);"><span class="r" style="width:44.23px"><span class="s" style="transform:scaleX(0.740)">フィールド</span></span><span class="r" style="width:12.02px">名</span></div>
<div class="t" style="left:629.50px;top:501.30px;color:#fff;font-family:'Liberation Sans','Noto Sans CJK JP',sans-serif;font-size:12px;font-weight:bold;transform:scaleX(0.9583);">値</div>
<div class="t" style="left:30.50px;top:528.00px;color:#fff;font-family:'Liberation Sans','Noto Sans CJK JP',sans-serif;font-size:12px;font-weight:bold;transform:scaleX(1.1500);"><span class="r" style="width:24.02px">入力</span><span class="r" style="width:26.65px"><span class="s" style="transform:scaleX(0.740)">データ</span></span></div>
<div class="t" style="left:181.20px;top:526.30px;color:#c00000;font-family:'DejaVu Sans','Noto Sans CJK JP',sans-serif;font-size:13px;transform:scaleX(1.0053);">fldInputText</div>
<div class="t" style="left:181.20px;top:552.20px;color:#c00000;font-family:'DejaVu Sans','Noto Sans CJK JP',sans-serif;font-size:13px;transform:scaleX(0.9698);">fldAttachedFile</div>
<div class="t" style="left:34.79px;top:600.50px;color:#fff;font-family:'DejaVu Sans','Noto Sans CJK JP',sans-serif;font-size:16px;transform:scaleX(1.0053);"><span class="r" style="width:86.89px"><span class="s" style="transform:scaleX(0.970)">LotusScript</span></span><span class="r" style="width:13.61px"><span class="s" style="transform:scaleX(0.850)">の</span></span><span class="r" style="width:32.02px">実行</span></div>
<div class="t" style="left:819.79px;top:677.30px;color:#c00000;font-family:'DejaVu Sans','Noto Sans CJK JP',sans-serif;font-size:12px;font-weight:bold;transform:scaleX(1.0111);"><span class="r" style="width:102.47px"><span class="s" style="transform:scaleX(1.030)">Notes/Domino </span></span><span class="r" style="width:25.22px"><span class="s" style="transform:scaleX(1.050)">開発</span></span><span class="r" style="width:26.36px"><span class="s" style="transform:scaleX(1.030)">tips</span></span></div>
<div class="t" style="left:583.00px;top:695.10px;color:#c00000;font-family:'DejaVu Sans','Noto Sans CJK JP',sans-serif;font-size:12px;font-weight:bold;transform:scaleX(1.0329);">Copyright (C) 2020,2024 ef Co.,Ltd. All Rights Reserved.</div>
<div class="t" style="left:959.75px;top:750.50px;color:#3c3c3c;font-family:'Liberation Sans','Noto Sans CJK JP',sans-serif;font-size:12px;transform:scaleX(0.7483);">オンライン</div>
</body></html>
